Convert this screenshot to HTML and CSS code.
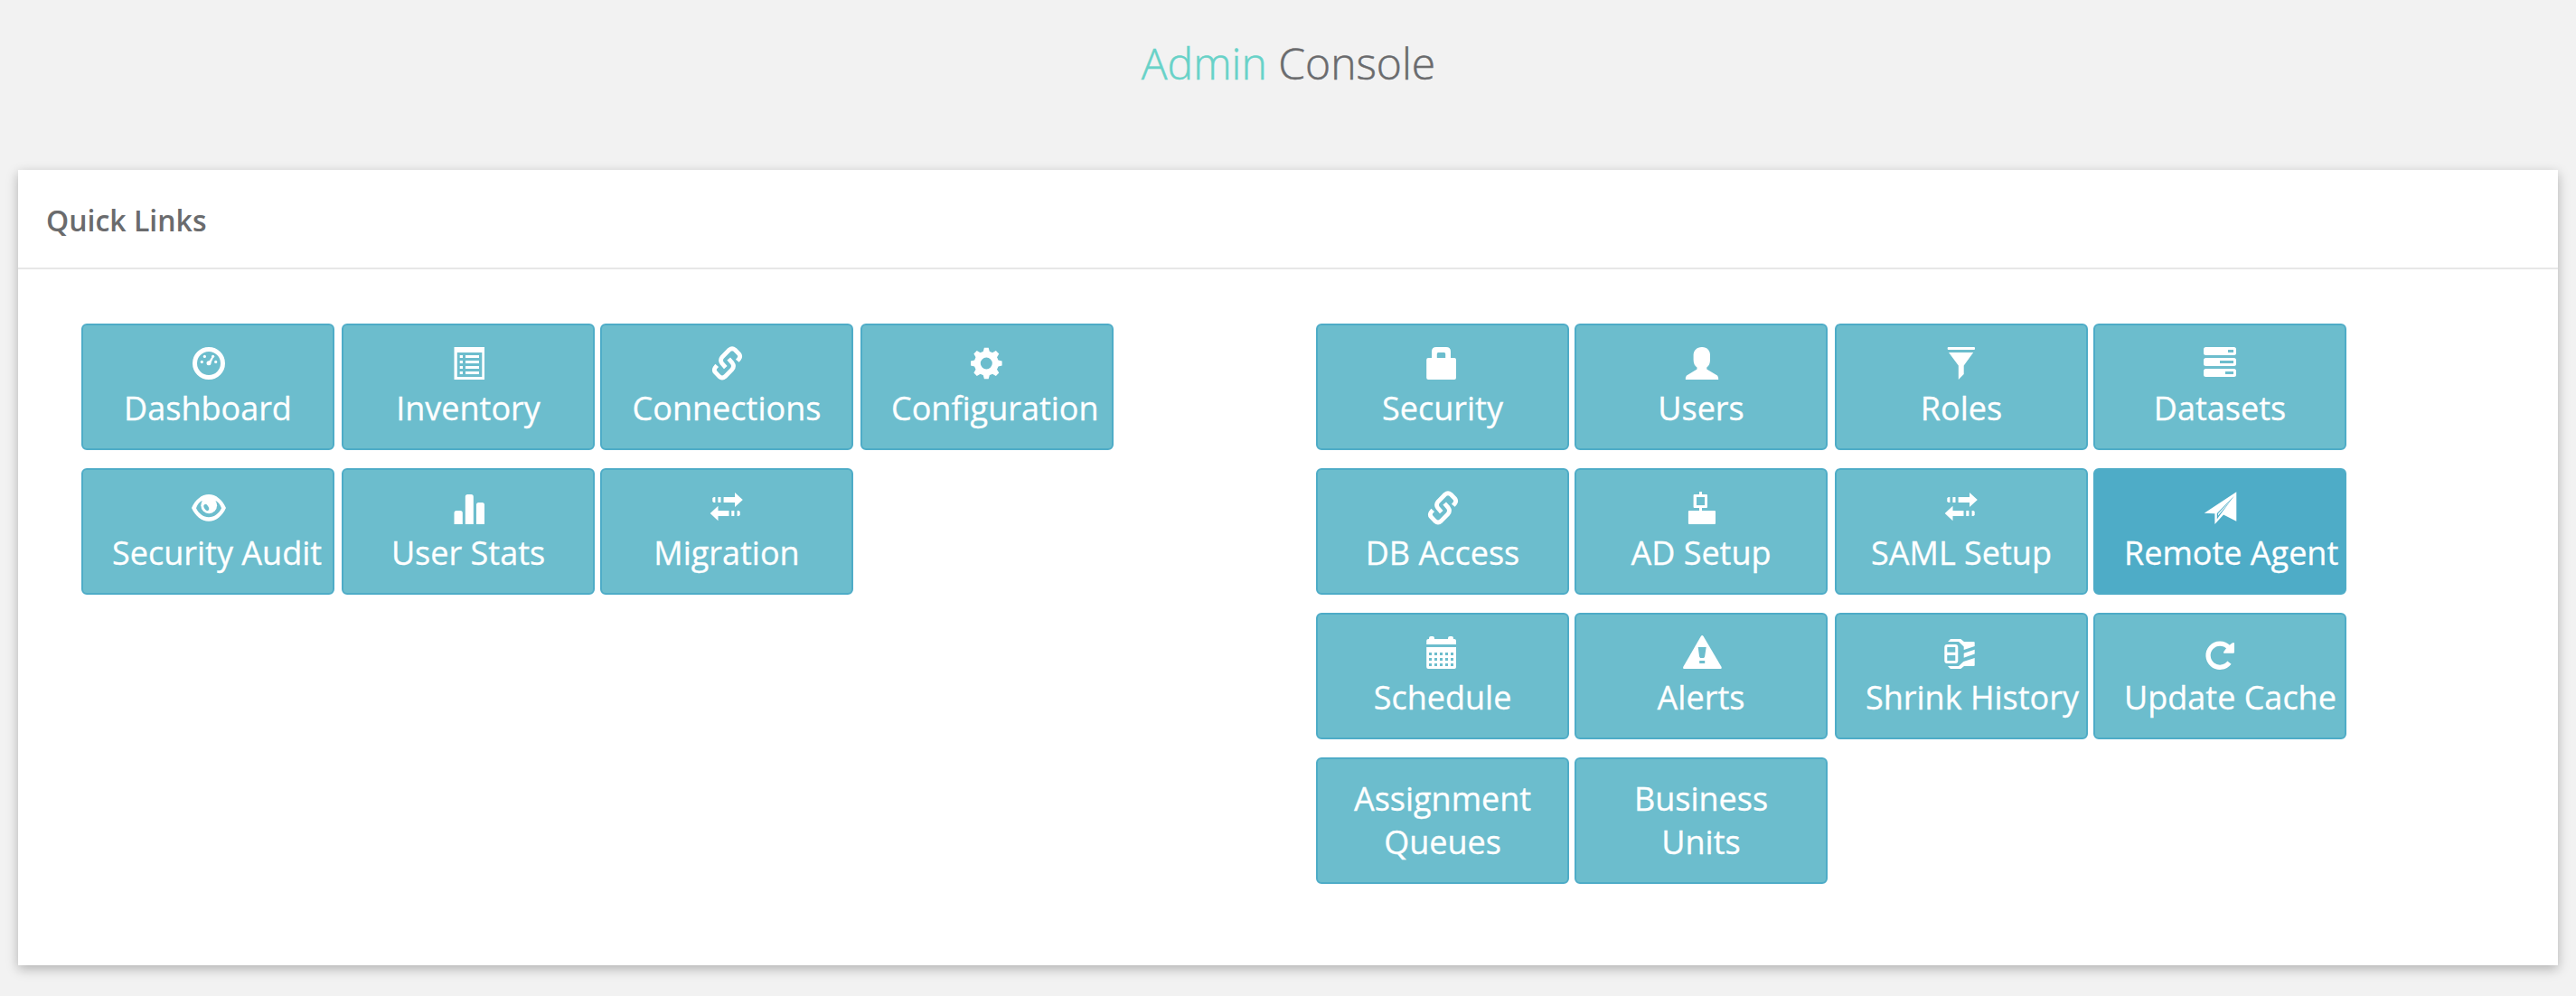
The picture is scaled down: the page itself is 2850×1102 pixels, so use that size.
FILE: index.html
```html
<!DOCTYPE html>
<html lang="en">
<head>
<meta charset="utf-8">
<title>Admin Console</title>
<link rel="stylesheet" href="styles.css">
</head>
<body>
<svg class="defs" aria-hidden="true">
  <symbol id="link" viewBox="0 0 44 40">
    <g fill="none" stroke="currentColor" stroke-width="4.8">
      <path d="M33.800 17.200L35.800 14.800Q37.600 12 35.600 9.600L31.200 5Q28 2.400 24.800 5L17 13Q14.200 16.600 16.800 20L20.800 24.600"/>
      <path d="M11.200 22.400L9.200 24.800Q7.400 27.600 9.400 30L13.800 34.600Q17 37.200 20.200 34.600L28 26.600Q30.800 23 28.200 19.600L24.200 15"/>
    </g>
  </symbol>
  <symbol id="transfer" viewBox="0 0 44 40">
    <path d="M9.400 8v6h-1.600l-1.500-1v-4l1.500-1zM12.400 8h3.100v6h-3.100zM18.600 8H31V3l8.800 8-8.800 8v-5H18.600zM12.500 17.700v5.300h12v6h-12v5.300L3.700 26zM27.300 23h3.100v6h-3.100zM33.600 23h1.600l1.500 1v4l-1.500 1h-1.600z"/>
  </symbol>
</svg>

<h1 class="title"><span class="title-accent">Admin</span> Console</h1>

<section class="panel">
  <h2 class="panel-heading">Quick Links</h2>
  <div class="panel-body">
    <div class="tiles tiles-left">
      <a class="tile">
        <svg class="icon" viewBox="0 0 44 40"><circle cx="23" cy="20" r="15.500" fill="none" stroke="currentColor" stroke-width="5"/><circle cx="18.400" cy="12.400" r="1.600"/><circle cx="15.300" cy="18.400" r="1.600"/><circle cx="30.700" cy="18.400" r="1.600"/><circle cx="27.600" cy="12.300" r="1.600"/><circle cx="23" cy="19.800" r="2.500"/><path d="M27 12l1.600.6-3.700 7.800-2.700-1.200z"/></svg>
        <span class="label">Dashboard</span>
      </a>
      <a class="tile">
        <svg class="icon" viewBox="0 0 44 40"><path fill-rule="evenodd" d="M6.500 2H40v36H6.500zM9.800 8v27h27.500V8z"/><path d="M12.700 11H16v3h-3.300zM19 11h15v3H19zM12.700 17H16v3h-3.300zM19 17h15v3H19zM12.700 23H16v3h-3.300zM19 23h15v3H19zM12.700 29H16v3h-3.300zM19 29h15v3H19z"/></svg>
        <span class="label">Inventory</span>
      </a>
      <a class="tile">
        <svg class="icon"><use href="#link"/></svg>
        <span class="label">Connections</span>
      </a>
      <a class="tile">
        <svg class="icon" viewBox="0 0 44 40"><g transform="translate(21.300 20)"><circle r="10" fill="none" stroke="currentColor" stroke-width="7"/><path id="tooth" d="M-3.800-12L-2.400-17.300H2.400L3.800-12V-10H-3.800z"/><use href="#tooth" transform="rotate(45)"/><use href="#tooth" transform="rotate(90)"/><use href="#tooth" transform="rotate(135)"/><use href="#tooth" transform="rotate(180)"/><use href="#tooth" transform="rotate(225)"/><use href="#tooth" transform="rotate(270)"/><use href="#tooth" transform="rotate(315)"/></g></svg>
        <span class="label">Configuration</span>
      </a>
      <a class="tile">
        <svg class="icon" viewBox="0 0 44 40"><path fill-rule="evenodd" d="M4 20C8 11 15 5 23 5S38 11 42 20C38 29 31 34.700 23 34.700S8 29 4 20zM9 20.300C12 26.500 17 30.200 23 30.200S34 26.500 37 20.300C36 17 34 14.200 31.500 12.500H14.500C12 14.200 10 17 9 20.300z"/><circle cx="23.200" cy="17.300" r="8.900"/><ellipse class="cut" cx="20.300" cy="19.500" rx="2.300" ry="3.900" transform="rotate(-32 20.300 19.500)"/></svg>
        <span class="label">Security Audit</span>
      </a>
      <a class="tile">
        <svg class="icon" viewBox="0 0 44 40"><path d="M6.500 38V25.500q0-2.500 2.500-2.500h4.300q2.500 0 2.500 2.500V38zM18.800 38V7.500q0-2.500 2.500-2.500h4q2.500 0 2.500 2.500V38zM31 38V16.500q0-2.500 2.500-2.500h4q2.500 0 2.500 2.500V38z"/></svg>
        <span class="label">User Stats</span>
      </a>
      <a class="tile">
        <svg class="icon"><use href="#transfer"/></svg>
        <span class="label">Migration</span>
      </a>
    </div>

    <div class="tiles tiles-right">
      <a class="tile">
        <svg class="icon" viewBox="0 0 44 40"><path fill-rule="evenodd" d="M10 14V7q0-5 5-5h11q5 0 5 5v7h4q2 0 2 2v20q0 2-2 2H6.200q-2 0-2-2V16q0-2 2-2zM15.800 14h9.400V9.500q0-1.500-1.500-1.500h-6.400q-1.500 0-1.500 1.500z"/></svg>
        <span class="label">Security</span>
      </a>
      <a class="tile">
        <svg class="icon" viewBox="0 0 44 40"><path d="M23 2c6 0 9 4 9 9v5c0 4-1.200 7-3.700 8.500v2L40 33.500q1.500 1.500 1.200 4.500H4.800q-.3-3 1.200-4.500l11.500-7v-2c-2.500-1.500-3.900-4.500-3.900-8.500v-5c0-5 3.400-9 9.400-9z"/></svg>
        <span class="label">Users</span>
      </a>
      <a class="tile">
        <svg class="icon" viewBox="0 0 44 40"><rect x="6.700" y="2" width="30.300" height="3" rx="1"/><path d="M8 8h27.200L24.700 22.600V32L18.800 38V22.600z"/></svg>
        <span class="label">Roles</span>
      </a>
      <a class="tile">
        <svg class="icon" viewBox="0 0 44 40"><rect x="4" y="2" width="36" height="9" rx="2.500"/><rect x="4" y="14" width="36" height="9" rx="2.500"/><rect x="4" y="26" width="36" height="9" rx="2.500"/><path class="cut" d="M31 5h6v3h-6zM22 17h15v3H22zM28 29h9v3h-9z"/></svg>
        <span class="label">Datasets</span>
      </a>
      <a class="tile">
        <svg class="icon"><use href="#link"/></svg>
        <span class="label">DB Access</span>
      </a>
      <a class="tile">
        <svg class="icon" viewBox="0 0 44 40"><path fill-rule="evenodd" d="M20 2h3v3h5q1 0 1 1v13q0 1-1 1h-5v3h14q1 0 1 1v13q0 1-1 1H8.900q-1 0-1-1V24q0-1 1-1H20v-3h-5.400q-1 0-1-1V6q0-1 1-1H20zM17 8v9h9V8z"/></svg>
        <span class="label">AD Setup</span>
      </a>
      <a class="tile">
        <svg class="icon"><use href="#transfer"/></svg>
        <span class="label">SAML Setup</span>
      </a>
      <a class="tile tile-active">
        <svg class="icon" viewBox="0 0 44 40"><path d="M40.300 2.300V34.800L26 27.500 16.400 38V26.300L4.700 25.700z"/><path class="cut" d="M37.800 6.800L18.800 26V32.500L20.200 30.500 23.500 26z"/><path d="M37 8.300L20 26.300V28.500z"/></svg>
        <span class="label">Remote Agent</span>
      </a>
      <a class="tile">
        <svg class="icon" viewBox="0 0 44 40"><path d="M7 5V4q0-2 2-2h2q2 0 2 2v1h15V4q0-2 2-2h2q2 0 2 2v1h1q2 0 2 2v4H4.200V7q0-2 2-2zM4.200 14H37v22q0 2-2 2H6.200q-2 0-2-2z"/><path class="cut" d="M7 20h3v3H7zM13 20h3v3h-3zM19 20h3v3h-3zM25 20h3v3h-3zM31 20h3v3h-3zM7 26h3v3H7zM13 26h3v3h-3zM19 26h3v3h-3zM25 26h3v3h-3zM31 26h3v3h-3zM7 32h3v3H7zM13 32h3v3h-3zM19 32h3v3h-3zM25 32h3v3h-3zM31 32h3v3h-3z"/></svg>
        <span class="label">Schedule</span>
      </a>
      <a class="tile">
        <svg class="icon" viewBox="0 0 44 40"><path d="M21.800 2q1.400-2 2.800 0L44.600 36q.8 2-1 2H3.200q-1.800 0-1-2z"/><path class="cut" d="M18.700 14h9l-1.600 10.500-1 1.500h-4l-1-1.500zM20.200 29h6v3h-6z"/></svg>
        <span class="label">Alerts</span>
      </a>
      <a class="tile">
        <svg class="icon" viewBox="0 0 44 40"><path fill-rule="evenodd" d="M6.300 11h9q3 0 3 3v15q0 3-3 3h-9q-3 0-3-3V14q0-3 3-3zM6.300 14v5.800h9V14zM6.300 23v6h9v-6z"/><path d="M7 8L10 5H21.300L25 8H35.700q1 0 1 1V13L24.700 17V13.500L19 8zM24.700 20.700L36.700 16.700V21.500L24.700 25.700zM7 35L10 38H21.300L25 35H35.700q1 0 1-1V26L24.300 30 19 35z"/></svg>
        <span class="label">Shrink History</span>
      </a>
      <a class="tile">
        <svg class="icon" viewBox="0 0 44 40"><path d="M32.500 31.200A13.100 13.100 0 1 1 31.500 14" fill="none" stroke="currentColor" stroke-width="5.300"/><path d="M30 14L35.500 9.500Q38 8.200 38 10V19.500q0 1.200-1.200 1.200H27.500q-2.500 0-1-2z"/></svg>
        <span class="label">Update Cache</span>
      </a>
      <a class="tile"><span class="label label-wrap">Assignment Queues</span></a>
      <a class="tile"><span class="label label-wrap">Business Units</span></a>
    </div>
  </div>
</section>
</body>
</html>
```
FILE: styles.css
```css
* {
  box-sizing: border-box;
}

body {
  margin: 0;
  padding: 36px 20px 34px;
  background: #f2f2f2;
  color: #6a6b6d;
  font-family: "Open Sans", "Noto Sans", sans-serif;
}

.defs {
  display: none;
}

.title {
  margin: 0;
  padding-left: 1px;
  height: 152px;
  font-size: 48px;
  font-weight: 300;
  line-height: 68px;
  text-align: center;
  -webkit-text-stroke: 0.5px currentColor;
}

.title-accent {
  color: #68d2c8;
}

.panel {
  height: 880px;
  background: #fff;
  box-shadow: 0 4px 12px rgba(0, 0, 0, 0.27);
}

.panel-heading {
  margin: 0;
  padding: 32px 31px 0;
  height: 110px;
  border-bottom: 2px solid #e7e7e7;
  font-size: 32px;
  font-weight: 600;
  line-height: 48px;
}

.panel-body {
  display: flex;
  gap: 224px;
  padding: 60px 70px 0;
}

.tiles {
  display: grid;
  grid-auto-rows: 140px;
  row-gap: 20px;
}

.tiles-left {
  grid-template-columns: 288px 286px 288px 280px;
}

.tiles-right {
  grid-template-columns: 286px 288px 286px 280px;
}

.tile {
  display: flex;
  flex-direction: column;
  width: 280px;
  padding: 20px 32px;
  border: 2px solid #4eacc7;
  border-radius: 6px;
  background: #6cbdcd;
  color: #fff;
  font-size: 36px;
  line-height: 48px;
  -webkit-text-stroke: 0.3px currentColor;
}

.tile-active {
  background: #4eacc7;
}

.icon {
  flex: none;
  align-self: center;
  width: 44px;
  height: 40px;
  margin: 2px 0 6px;
  fill: currentColor;
  overflow: visible;
}

.cut {
  fill: #6cbdcd;
}

.tile-active .cut {
  fill: #4eacc7;
}

.label {
  text-align: center;
  white-space: nowrap;
}

.label-wrap {
  white-space: normal;
}
```
